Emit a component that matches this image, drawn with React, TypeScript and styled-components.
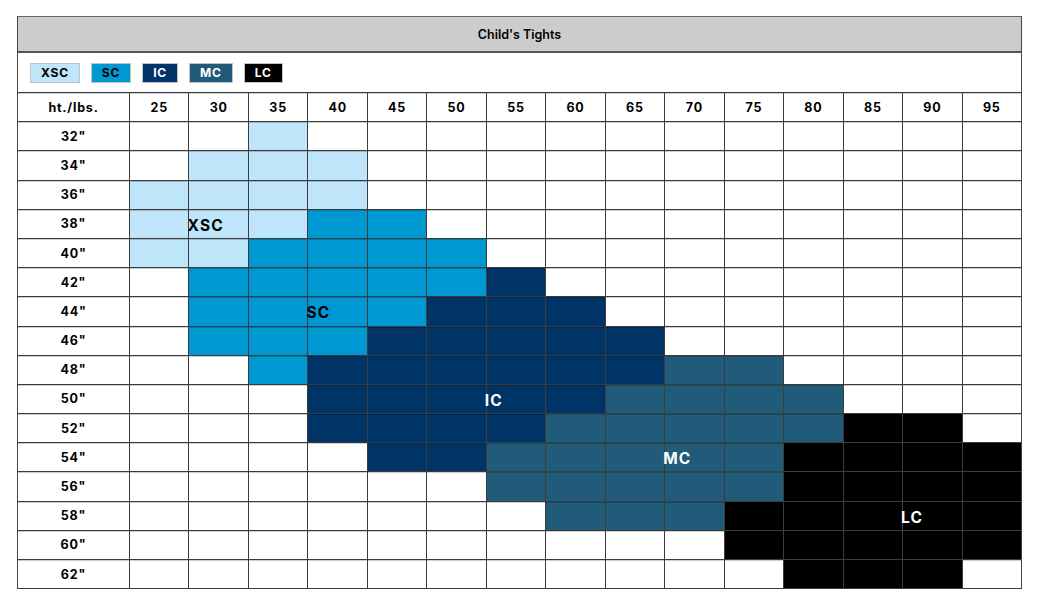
import React from "react";
import styled, { createGlobalStyle } from "styled-components";

type Size = "XSC" | "SC" | "IC" | "MC" | "LC";

const COLORS: Record<Size, { bg: string; fg: string }> = {
  XSC: { bg: "#bee5f9", fg: "#000" },
  SC: { bg: "#0098d2", fg: "#000" },
  IC: { bg: "#003366", fg: "#fff" },
  MC: { bg: "#215b7a", fg: "#fff" },
  LC: { bg: "#000000", fg: "#fff" },
};

const WEIGHTS = [25, 30, 35, 40, 45, 50, 55, 60, 65, 70, 75, 80, 85, 90, 95];

// each height row: [size, first weight, last weight] ranges
const RANGES: Record<number, [Size, number, number][]> = {
  32: [["XSC", 35, 35]],
  34: [["XSC", 30, 40]],
  36: [["XSC", 25, 40]],
  38: [["XSC", 25, 35], ["SC", 40, 45]],
  40: [["XSC", 25, 30], ["SC", 35, 50]],
  42: [["SC", 30, 50], ["IC", 55, 55]],
  44: [["SC", 30, 45], ["IC", 50, 60]],
  46: [["SC", 30, 40], ["IC", 45, 65]],
  48: [["SC", 35, 35], ["IC", 40, 65], ["MC", 70, 75]],
  50: [["IC", 40, 60], ["MC", 65, 80]],
  52: [["IC", 40, 55], ["MC", 60, 80], ["LC", 85, 90]],
  54: [["IC", 45, 50], ["MC", 55, 75], ["LC", 80, 95]],
  56: [["MC", 55, 75], ["LC", 80, 95]],
  58: [["MC", 60, 70], ["LC", 75, 95]],
  60: [["LC", 75, 95]],
  62: [["LC", 80, 90]],
};

// where the size name is written: height -> [weight, size]
const LABELS: Record<number, [number, Size]> = {
  38: [30, "XSC"],
  44: [40, "SC"],
  50: [55, "IC"],
  54: [70, "MC"],
  58: [90, "LC"],
};

const HEIGHTS = Object.keys(RANGES).map(Number);

const sizeAt = (ht: number, lbs: number): Size | undefined => {
  const hit = RANGES[ht].find(([, a, b]) => lbs >= a && lbs <= b);
  return hit ? hit[0] : undefined;
};

const GlobalStyle = createGlobalStyle`
  body {
    margin: 0;
    background: #fff;
    font-family: Inter, "Open Sans", sans-serif;
    color: #000;
  }
`;

const Page = styled.div`
  padding: 16px 0 0 17px;
`;

const Frame = styled.div`
  width: 1005px;
  box-sizing: border-box;
  border-left: 1px solid #444;
  border-right: 1px solid #444;
  border-top: 1px solid #666;
  border-bottom: 1px solid #3c3c3c;
`;

const TitleBar = styled.div`
  height: 34px;
  background: #cccccc;
  border-bottom: 2px solid #555;
  display: flex;
  align-items: center;
  justify-content: center;
  font-size: 12.5px;
  font-weight: 600;
`;

const Legend = styled.div`
  height: 39px;
  display: flex;
  align-items: center;
  gap: 11px;
  padding-left: 12px;
`;

const Swatch = styled.div<{ $size: Size }>`
  height: 20px;
  box-sizing: border-box;
  padding: 0 10px;
  display: flex;
  align-items: center;
  border: 1px solid #c4c4c4;
  background: ${(p) => COLORS[p.$size].bg};
  color: ${(p) => COLORS[p.$size].fg};
  font-size: 12px;
  font-weight: 700;
  letter-spacing: 0.8px;
`;

const Chart = styled.div`
  display: grid;
  grid-template-columns: 111px repeat(15, 1fr);
  grid-auto-rows: 29.2px;
`;

const Cell = styled.div<{ $fill?: Size; $first?: boolean }>`
  position: relative;
  box-sizing: border-box;
  border-top: 1px solid #3c3c3c;
  border-left: ${(p) => (p.$first ? "none" : "1px solid #3c3c3c")};
  box-shadow: inset 0 1px 0 rgba(0, 0, 0, 0.2);
  background: ${(p) => (p.$fill ? COLORS[p.$fill].bg : "#fff")};
  display: flex;
  align-items: center;
  justify-content: center;
  font-size: 12.5px;
  font-weight: 700;
  letter-spacing: 0.8px;
`;

const Label = styled.span<{ $size: Size }>`
  position: absolute;
  left: -2px;
  top: 50%;
  transform: translateY(-40%);
  z-index: 2;
  font-size: 15.5px;
  font-weight: 700;
  letter-spacing: 1.2px;
  color: ${(p) => COLORS[p.$size].fg};
  white-space: nowrap;
`;

const App: React.FC = () => {
  return (
    <>
      <GlobalStyle />
      <Page>
        <Frame>
          <TitleBar>Child's Tights</TitleBar>
          <Legend>
            {(Object.keys(COLORS) as Size[]).map((s) => (
              <Swatch key={s} $size={s}>
                {s}
              </Swatch>
            ))}
          </Legend>
          <Chart>
            <Cell $first>ht./lbs.</Cell>
            {WEIGHTS.map((w) => (
              <Cell key={w}>{w}</Cell>
            ))}
            {HEIGHTS.map((ht) => (
              <React.Fragment key={ht}>
                <Cell $first>{ht}"</Cell>
                {WEIGHTS.map((w) => {
                  const label = LABELS[ht];
                  return (
                    <Cell key={w} $fill={sizeAt(ht, w)}>
                      {label && label[0] === w && (
                        <Label $size={label[1]}>{label[1]}</Label>
                      )}
                    </Cell>
                  );
                })}
              </React.Fragment>
            ))}
          </Chart>
        </Frame>
      </Page>
    </>
  );
};

export default App;
